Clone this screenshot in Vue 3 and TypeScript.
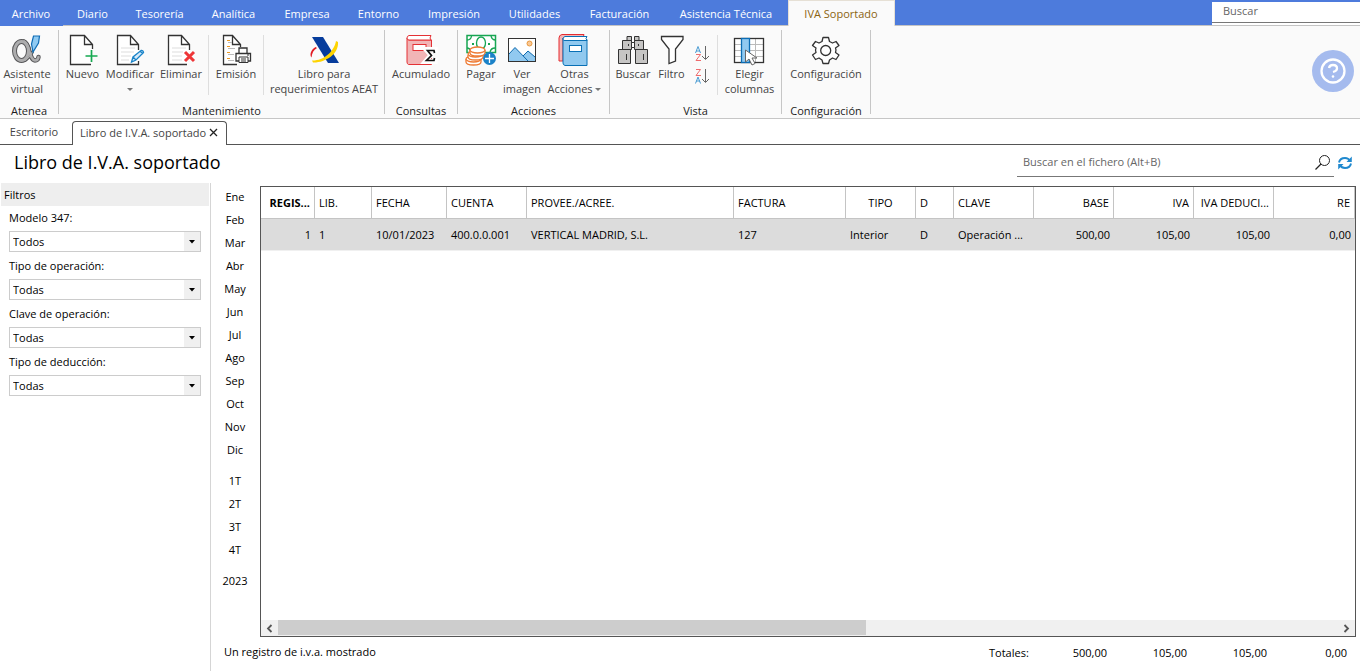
<script setup lang="ts">
import { ref } from 'vue'

const menus = ['Archivo', 'Diario', 'Tesorería', 'Analítica', 'Empresa', 'Entorno', 'Impresión', 'Utilidades', 'Facturación', 'Asistencia Técnica', 'IVA Soportado']
const activeMenu = 'IVA Soportado'

const filters = [
  { id: 'modelo', label: 'Modelo 347:', value: 'Todos' },
  { id: 'operacion', label: 'Tipo de operación:', value: 'Todas' },
  { id: 'clave', label: 'Clave de operación:', value: 'Todas' },
  { id: 'deduccion', label: 'Tipo de deducción:', value: 'Todas' },
]

const periods = [
  ['Ene', 'Feb', 'Mar', 'Abr', 'May', 'Jun', 'Jul', 'Ago', 'Sep', 'Oct', 'Nov', 'Dic'],
  ['1T', '2T', '3T', '4T'],
  ['2023'],
]

interface Column { key: string; title: string; value: string; align?: 'right' | 'center' }
const columns: Column[] = [
  { key: 'registro', title: 'REGIS...', value: '1', align: 'right' },
  { key: 'libro', title: 'LIB.', value: '1' },
  { key: 'fecha', title: 'FECHA', value: '10/01/2023' },
  { key: 'cuenta', title: 'CUENTA', value: '400.0.0.001' },
  { key: 'proveedor', title: 'PROVEE./ACREE.', value: 'VERTICAL MADRID, S.L.' },
  { key: 'factura', title: 'FACTURA', value: '127' },
  { key: 'tipo', title: 'TIPO', value: 'Interior', align: 'center' },
  { key: 'd', title: 'D', value: 'D' },
  { key: 'clave', title: 'CLAVE', value: 'Operación ...' },
  { key: 'base', title: 'BASE', value: '500,00', align: 'right' },
  { key: 'iva', title: 'IVA', value: '105,00', align: 'right' },
  { key: 'deducible', title: 'IVA DEDUCI...', value: '105,00', align: 'right' },
  { key: 're', title: 'RE', value: '0,00', align: 'right' },
]
const totals = ['500,00', '105,00', '105,00', '0,00']
const globalSearch = ref('')
const fileSearch = ref('')
</script>

<template>
  <div class="app">
    <header class="menubar">
      <nav class="menus" aria-label="Menú principal">
        <button v-for="m in menus" :key="m" class="menu" :class="{ active: m === activeMenu }">{{ m }}</button>
      </nav>
      <div class="global-search">
        <input v-model="globalSearch" type="text" placeholder="Buscar" aria-label="Buscar" />
      </div>
    </header>

    <section class="ribbon">
      <div class="group g-atenea">
        <div class="tools">
          <button class="tool">
            <svg class="icon" viewBox="0 0 32 32">
              <g fill="none" stroke-linecap="round">
                <g stroke="#58585a">
                  <ellipse cx="10.500" cy="16" rx="7" ry="9.500" stroke-width="5" />
                  <path d="M13 6.500C19 9 18 25 24 25.500Q27 25.500 27.500 22" stroke-width="4.500" />
                  <path d="M21.500 17Q19 22 14 25.500" stroke-width="3" />
                </g>
                <g stroke="#adadae">
                  <ellipse cx="10.500" cy="16" rx="7" ry="9.500" stroke-width="3" />
                  <path d="M13 6.500C19 9 18 25 24 25.500Q27 25.500 27.500 22" stroke-width="2.500" />
                  <path d="M21.500 17Q19 22 14 25.500" stroke-width="1.200" />
                </g>
              </g>
              <path d="M22.500 1H28.500L27.500 8L22 17L20.500 9Z" fill="#8fcaf2" stroke="#0f6cb5" stroke-width="1.200" />
            </svg>
            <span>Asistente<br />virtual</span>
          </button>
        </div>
        <div class="group-name">Atenea</div>
      </div>

      <div class="group g-mant">
        <div class="tools">
          <button class="tool">
            <svg class="icon" viewBox="0 0 32 32">
              <path d="M25.500 14V9.500L17.500 .500H3.500V29.500H24M17.500 .500V9.500H25.500" fill="#fff" stroke="#333" stroke-width="1.300" />
              <path d="M24.500 15V27M18.500 21H30.500" stroke="#16a951" stroke-width="1.700" />
            </svg>
            <span>Nuevo</span>
          </button>
          <button class="tool">
            <svg class="icon" viewBox="0 0 32 32">
              <path d="M24.500 15V9.500L16.500 .500H3.500V29.500H24.500V26M16.500 .500V9.500H24.500" fill="#fff" stroke="#333" stroke-width="1.300" />
              <path d="M7 13H21M7 17H20M7 21H17M7 25H15" stroke="#ddd" />
              <path d="M17.500 27L19 22L27 15.500Q29 15 29.500 17.500L22 25ZM19 22L22 25M26 16L29 19" fill="#d5eafa" stroke="#1883c8" stroke-width="1.300" />
            </svg>
            <span>Modificar</span>
            <svg class="caret" viewBox="0 0 6 4"><path d="M0 0H6L3 3Z" fill="#777" /></svg>
          </button>
          <button class="tool">
            <svg class="icon" viewBox="0 0 32 32">
              <path d="M24.500 15V9.500L16.500 .500H3.500V29.500H22M16.500 .500V9.500H24.500" fill="#fff" stroke="#333" stroke-width="1.300" />
              <path d="M7 13H21M7 17H18M7 21H17M7 25H17" stroke="#ddd" />
              <path d="M20 17L29 26M29 17L20 26" stroke="#ee3537" stroke-width="3" />
            </svg>
            <span>Eliminar</span>
          </button>
          <i class="divider"></i>
          <button class="tool">
            <svg class="icon" viewBox="0 0 32 32">
              <path d="M20.500 12V9.500L12.500 .500H3.500V29.500H17M12.500 .500V9.500H20.500" fill="#fff" stroke="#333" stroke-width="1.300" />
              <path d="M7 5.500H10M7 11.500H10M7 17.500H10M7 23.500H10" stroke="#eb9824" />
              <path d="M8 7.500H12M8 13.500H15M8 19.500H14M8 25.500H14" stroke="#bbb" />
              <path d="M19 18V13H27V18" fill="#fff" stroke="#333" stroke-width="1.300" />
              <path d="M19 26H16V18.500H30.500V26H27" fill="#fff" stroke="#333" stroke-width="1.300" />
              <path d="M19 22H28V27.500H19ZM21 24H26M21 26H26" fill="#fff" stroke="#333" />
              <path d="M27 20H29" stroke="#333" />
            </svg>
            <span>Emisión</span>
          </button>
          <i class="divider"></i>
          <button class="tool">
            <svg class="icon" viewBox="0 0 32 32">
              <path d="M4 2H15L31 28H20Z" fill="#063c9c" />
              <path d="M7.500 12C2.500 15 1.500 20 3.500 22.500C4 18 5.500 15 9 13Z" fill="#e21c24" />
              <path d="M28 6C26 17 15 26 4 25.500L5 27.500C17 28 31 19 30 7Z" fill="#fed401" />
            </svg>
            <span>Libro para<br />requerimientos AEAT</span>
          </button>
        </div>
        <div class="group-name">Mantenimiento</div>
      </div>

      <div class="group g-cons">
        <div class="tools">
          <button class="tool">
            <svg class="icon" viewBox="0 0 32 32">
              <path d="M3.500 5H26.500V29.500H3.500Q2 29 2 27V3Z" fill="#f1b5b6" stroke="#e43135" />
              <path d="M26 .500H4Q2 1 2 3T4 5H26L25 3Z" fill="#fff" stroke="#e43135" />
              <rect x="8" y="9.500" width="13" height="6" fill="#fff" stroke="#e43135" />
              <path d="M30 18V14.500H21L26 20L20.500 26.500H30V23" fill="none" stroke="#fff" stroke-width="5" />
              <path d="M29.500 18L29 15.500H22.500L26.500 20.500L21.500 25.500H29L29.500 23" fill="none" stroke="#111" stroke-width="1.700" />
            </svg>
            <span>Acumulado</span>
          </button>
        </div>
        <div class="group-name">Consultas</div>
      </div>

      <div class="group g-acc">
        <div class="tools">
          <button class="tool">
            <svg class="icon" viewBox="0 0 32 32">
              <path d="M2 .500H30.500V17.500H2Z" fill="#fff" stroke="#17a552" stroke-width="1.500" />
              <path d="M2 5Q6 5 6.500 1M26 1Q27 5 30.500 5M2 13Q5 13 6 17M25 17Q26 13 30 13" fill="none" stroke="#17a552" stroke-width="1.300" />
              <ellipse cx="16" cy="8" rx="4.500" ry="6" fill="none" stroke="#17a552" stroke-width="1.300" />
              <path d="M7 9H9M23 9H25" stroke="#17a552" stroke-width="2" />
              <g fill="#fff" stroke="#ee7b35" stroke-width="1.300">
                <path d="M1 24V27C1 31 16 31 16 27V24" /><ellipse cx="8.500" cy="24" rx="7.500" ry="3" />
                <path d="M3 20V22C3 26 18 26 18 22V20" /><ellipse cx="10.500" cy="19" rx="7.500" ry="3" />
                <path d="M5 15V18C5 22 20 22 20 18V15" /><ellipse cx="12.500" cy="15" rx="7.500" ry="3" />
              </g>
              <circle cx="24.500" cy="23.500" r="6.500" fill="#1b82c8" />
              <path d="M24.500 19V28M20 23.500H29" stroke="#fff" stroke-width="1.300" />
            </svg>
            <span>Pagar</span>
          </button>
          <button class="tool">
            <svg class="icon" viewBox="0 0 32 32">
              <rect x="2.500" y="3.500" width="27" height="23" fill="#fff" />
              <path d="M3 19L9 12.500L17 21L22 16L29 22V26H3Z" fill="#91c9f0" />
              <path d="M3 19L9 12.500L22 26M17 21L22 16L29 22" fill="none" stroke="#0d69ae" />
              <circle cx="23.500" cy="8.500" r="2.500" fill="#f9c896" stroke="#e9983c" />
              <rect x="2.500" y="3.500" width="27" height="23" fill="none" stroke="#333" />
            </svg>
            <span>Ver<br />imagen</span>
          </button>
          <button class="tool">
            <svg class="icon" viewBox="0 0 32 32">
              <path d="M25 -.500H3Q0 0 0 3V26H4V3H24Z" fill="#f4b4b5" stroke="#e52c31" />
              <path d="M5 4.500H28V30.500H6Q4 30 4 28V3Z" fill="#91c9ef" stroke="#0970b5" />
              <path d="M28 1.500H6Q4 2 4 4T6 5.500H28L27 3.500Z" fill="#fff" stroke="#0970b5" />
              <rect x="10.500" y="10.500" width="12" height="6" fill="#fff" stroke="#0970b5" />
            </svg>
            <span>Otras<br />Acciones <svg class="caret inline" viewBox="0 0 6 4"><path d="M0 0H6L3 3Z" fill="#777" /></svg></span>
          </button>
        </div>
        <div class="group-name">Acciones</div>
      </div>

      <div class="group g-vista">
        <div class="tools">
          <button class="tool">
            <svg class="icon" viewBox="0 0 32 32">
              <g fill="#c6c5c4" stroke="#333">
                <path d="M10 1.500H14.500V5.500H10ZM17.500 1.500H22V5.500H17.500ZM5.500 5.500H14.500V14.500H5.500ZM17.500 5.500H26.500V14.500H17.500ZM1.500 14.500H13.500V28.500H1.500ZM18.500 14.500H30.500V28.500H18.500Z" />
                <path d="M14.500 7.500H17.500V12.500H14.500Z" fill="#fff" />
                <path d="M9.500 19V25M11.500 9V11M21.500 9V11M26.500 19V25" />
              </g>
            </svg>
            <span>Buscar</span>
          </button>
          <button class="tool">
            <svg class="icon" viewBox="0 0 32 32"><path d="M5.500 1.500H27V4.500L19.500 14V26L13 28.500V14L5.500 4.500Z" fill="#fff" stroke="#333" stroke-width="1.300" /></svg>
            <span>Filtro</span>
          </button>
          <div class="sorts">
            <button aria-label="Orden ascendente">
              <svg viewBox="0 0 16 17"><path d="M1.500 8L4 1.500L6.500 8M2 6H6" fill="none" stroke="#4b9cd3" /><path d="M2 9.500H6.500L2 15.500H7" fill="none" stroke="#ee6b6d" /><path d="M11.500 1V14M8 11L11.500 14.500L15 11" fill="none" stroke="#666" /></svg>
            </button>
            <button aria-label="Orden descendente">
              <svg viewBox="0 0 16 17"><path d="M2 1.500H6.500L2 7.500H7" fill="none" stroke="#ee6b6d" /><path d="M1.500 15.500L4 9L6.500 15.500M2 13H6" fill="none" stroke="#4b9cd3" /><path d="M11.500 1V14M8 11L11.500 14.500L15 11" fill="none" stroke="#666" /></svg>
            </button>
          </div>
          <i class="divider"></i>
          <button class="tool">
            <svg class="icon" viewBox="0 0 32 32">
              <rect x=".500" y="3.500" width="29" height="24" fill="#fff" />
              <path d="M1 9.500H29M1 15.500H29M1 21.500H29M21.500 4V27" stroke="#bbb" />
              <rect x=".500" y="3.500" width="29" height="24" fill="none" stroke="#333" stroke-width="1.300" />
              <rect x="7.500" y="3.500" width="8" height="24" fill="#91c9f0" stroke="#0c6db5" stroke-width="1.300" />
              <path d="M11.500 15V27L15 24L18 30L21 28.500L18 23H23Z" fill="#fff" stroke="#666" />
            </svg>
            <span>Elegir<br />columnas</span>
          </button>
        </div>
        <div class="group-name">Vista</div>
      </div>

      <div class="group g-conf">
        <div class="tools">
          <button class="tool">
            <svg class="icon" viewBox="0 0 32 32">
              <path d="M13 2.500H18.500L19.500 6.500L22.500 8L26 6.500L29 10.500L25.500 13Q26.500 15 25.500 17.500L29 20L26 24.500L22.500 23L19.500 25L18.500 28.500H13L12 25L9 23L5.500 24.500L2.500 20L6 17.500Q5 15 6 13L2.500 10.500L5.500 6.500L9 8L12 6.500Z" fill="#fff" stroke="#333" stroke-width="1.300" stroke-linejoin="round" />
              <circle cx="15.700" cy="15.500" r="5" fill="#fff" stroke="#333" stroke-width="1.300" />
            </svg>
            <span>Configuración</span>
          </button>
        </div>
        <div class="group-name">Configuración</div>
      </div>

      <button class="help" aria-label="Ayuda">
        <svg viewBox="0 0 42 42">
          <circle cx="21" cy="21" r="21" fill="#a5bbee" />
          <circle cx="21" cy="21" r="11.500" fill="none" stroke="#fff" stroke-width="2.300" />
          <path d="M17 18Q17.500 15 21 15Q25 15 25 18.500Q25 21 21 22" fill="none" stroke="#fff" stroke-width="2.300" />
          <circle cx="21" cy="26.500" r="1.300" fill="#fff" />
        </svg>
      </button>
    </section>

    <nav class="tabs" aria-label="Ventanas abiertas">
      <button class="tab first">Escritorio</button>
      <div class="tab current">
        <button>Libro de I.V.A. soportado</button>
        <button class="close" aria-label="Cerrar">
          <svg viewBox="0 0 9 9"><path d="M1 1L8 8M8 1L1 8" stroke="#222" stroke-width="1.300" /></svg>
        </button>
      </div>
      <div class="tab rest"></div>
    </nav>

    <div class="heading">
      <h1>Libro de I.V.A. soportado</h1>
      <div class="file-search">
        <input v-model="fileSearch" type="text" placeholder="Buscar en el fichero (Alt+B)" aria-label="Buscar en el fichero" />
        <button aria-label="Buscar en el fichero">
          <svg viewBox="0 0 16 16"><circle cx="9.500" cy="6.500" r="5" fill="none" stroke="#222" /><path d="M6 10L.500 15.500" stroke="#222" stroke-width="1.200" /></svg>
        </button>
      </div>
      <button class="refresh" aria-label="Actualizar">
        <svg viewBox="0 0 16 16">
          <path d="M2 7.500Q3 3 8 3Q11.500 3 13 6M14 8.500Q13 13 8 13Q4.500 13 3 10" fill="none" stroke="#2089cf" stroke-width="2" />
          <path d="M14.800 1.500V7H9.500ZM1.200 14.500V9H6.500Z" fill="#2089cf" />
        </svg>
      </button>
    </div>

    <main class="content">
      <aside class="filters">
        <h2>Filtros</h2>
        <div v-for="f in filters" :key="f.id" class="field">
          <label :for="f.id">{{ f.label }}</label>
          <div class="combo">
            <select :id="f.id"><option>{{ f.value }}</option></select>
            <span class="arrow"><svg viewBox="0 0 6 4"><path d="M0 0H6L3 3.500Z" fill="#000" /></svg></span>
          </div>
        </div>
      </aside>

      <div class="workspace">
        <div class="upper">
          <nav class="periods" aria-label="Periodo">
            <div v-for="(g, i) in periods" :key="i" class="period-set">
              <button v-for="p in g" :key="p">{{ p }}</button>
            </div>
          </nav>
          <div class="grid-box">
            <div class="grid-scroll">
              <table>
                <colgroup><col v-for="c in columns" :key="c.key" :class="'c-' + c.key" /></colgroup>
                <thead>
                  <tr><th v-for="c in columns" :key="c.key" :class="c.align">{{ c.title }}</th></tr>
                </thead>
                <tbody>
                  <tr><td v-for="c in columns" :key="c.key" :class="c.align">{{ c.value }}</td></tr>
                </tbody>
              </table>
            </div>
            <div class="scrollbar">
              <button aria-label="Desplazar a la izquierda"><svg viewBox="0 0 7 9"><path d="M5.500 1L2 4.500L5.500 8" fill="none" stroke="#555" stroke-width="1.800" /></svg></button>
              <div class="track"><div class="thumb"></div></div>
              <button aria-label="Desplazar a la derecha"><svg viewBox="0 0 7 9"><path d="M1.500 1L5 4.500L1.500 8" fill="none" stroke="#555" stroke-width="1.800" /></svg></button>
            </div>
          </div>
        </div>
        <footer class="status">
          <span class="count">Un registro de i.v.a. mostrado</span>
          <span class="totals-name">Totales:</span>
          <span v-for="(t, i) in totals" :key="i" class="total">{{ t }}</span>
        </footer>
      </div>
    </main>
  </div>
</template>

<style>
body { margin: 0; background: #fff; }
</style>

<style scoped>
* { box-sizing: border-box; }
.app {
  min-height: 100vh;
  display: flex;
  flex-direction: column;
  font-family: "Open Sans", "Noto Sans", sans-serif;
  font-size: 11px;
  line-height: 15px;
  color: #000;
  overflow: hidden;
}
button, input, select { font: inherit; color: inherit; border: 0; background: none; padding: 0; margin: 0; border-radius: 0; outline: 0; }
button { white-space: nowrap; }
svg { display: block; }

.menubar { display: flex; justify-content: space-between; height: 26px; background: #4d7bdc; border-bottom: 1px solid #c4c4c4; }
.menus { display: grid; grid-template-columns: 63px 60px 74px 74px 73px 70px 81px 80px 90px 123px 107px; }
.menu { color: #fff; height: 25px; padding: 1px 1px 0 0; }
.menu:first-child { height: 26px; background: #4d7bdc; }
.menu.active { color: #8a6410; background: #fafafa; height: 26px; border: 1px solid #e6e0d5; border-bottom: 0; padding-top: 0; }
.global-search { width: 148px; border-top: 2px solid #4d7bdc; background: #fff; }
.global-search input { display: block; width: 100%; height: 21px; padding: 0 11px 3px; border-bottom: 1px solid #777; }
input::placeholder { color: #666; opacity: 1; }

.ribbon { display: flex; height: 93px; background: #fafafa; border-bottom: 1px solid #c6c6c6; padding: 4px 0; color: #444; }
.group { flex: none; border-right: 1px solid #c6c6c6; display: flex; flex-direction: column; height: 84px; }
.g-atenea { width: 59px; }
.g-mant { width: 326px; }
.g-cons { width: 73px; }
.g-acc { width: 152px; }
.g-vista { width: 172px; }
.g-conf { width: 89px; }
.tools { display: grid; flex: none; height: 73px; padding-top: 5px; grid-template-columns: minmax(0, 1fr); }
.g-atenea .tools { grid-template-columns: 54px; }
.g-mant .tools { grid-template-columns: 47px 48px 54px 1px 54px 1px 120px; }
.g-acc .tools { grid-template-columns: 46px 36px 69px; }
.g-vista .tools { grid-template-columns: 46px 31px 30px 1px 63px; }
.tool { display: flex; flex-direction: column; align-items: center; justify-content: flex-start; text-align: center; }
.icon { width: 32px; height: 32px; flex: none; overflow: visible; margin-bottom: -1px; }
.caret { width: 6px; height: 4px; margin-top: 7px; }
.caret.inline { display: inline-block; margin: 0; vertical-align: middle; }
.divider { width: 1px; height: 60px; background: #dedede; }
.sorts { display: flex; flex-direction: column; align-items: center; gap: 6px; padding-top: 10px; }
.sorts svg { width: 16px; height: 17px; }
.group-name { text-align: center; color: #1c1c1c; line-height: 15px; }
.help { width: 42px; height: 42px; margin: 20px 6px 0 auto; }

.tabs { display: flex; height: 26px; padding-top: 2px; color: #444; }
.tab { border-bottom: 1px solid #555; }
.first { width: 72px; padding: 0 4px 2px 0; }
.rest { flex: 1; }
.current { display: flex; align-items: center; border: 1px solid #555; border-bottom: 0; border-radius: 4px 4px 0 0; padding: 0 8px 3px 7px; width: 155px; justify-content: space-between; }
.close { width: 9px; height: 9px; flex: none; }
.close svg { width: 9px; height: 9px; }

.heading { display: flex; align-items: flex-start; height: 38px; padding: 0 7px 0 14px; }
h1 { margin: 0; font-size: 18px; font-weight: 400; line-height: 35px; flex: 1; }
.file-search { width: 317px; height: 32px; border-bottom: 1px solid #777; display: flex; align-items: center; padding: 2px 3px 0 6px; }
.file-search input { flex: 1; min-width: 0; height: 24px; }
.file-search button { width: 16px; height: 16px; }
.refresh { width: 16px; height: 16px; margin: 10px 0 0 3px; }

.content { flex: 1; display: flex; }
.filters { width: 211px; border-right: 1px solid #d5d5d5; padding: 0 1px; }
h2 { margin: 0 0 4px; font-size: 11px; font-weight: 400; line-height: 23px; height: 23px; padding-left: 3px; background: #eee; }
.field { height: 48px; padding: 0 8px; }
label { display: block; line-height: 16px; height: 21px; }
.combo { position: relative; height: 21px; }
select { appearance: none; width: 100%; height: 21px; border: 1px solid #ccc; background: #fff; padding: 0 20px 0 3px; display: block; }
.arrow { position: absolute; top: 1px; right: 1px; bottom: 1px; width: 16px; background: #f0f0f0; display: flex; align-items: center; justify-content: center; pointer-events: none; }
.arrow svg { width: 6px; height: 4px; }

.workspace { flex: 1; min-width: 0; display: flex; flex-direction: column; padding: 3px 4px 0 0; }
.upper { flex: 1; display: flex; }
.periods { width: 49px; display: flex; flex-direction: column; gap: 8px; }
.period-set { display: flex; flex-direction: column; }
.period-set button { height: 23px; padding: 0 1px 2px 0; }
.grid-box { flex: 1; min-width: 0; border: 1px solid #555; display: flex; flex-direction: column; }
.grid-scroll { flex: 1; overflow: hidden; }
table { width: 100%; table-layout: fixed; border-collapse: separate; border-spacing: 0; }
.c-registro { width: 54px; }
.c-libro { width: 57px; }
.c-fecha { width: 75px; }
.c-cuenta, .c-clave, .c-base, .c-iva, .c-deducible { width: 80px; }
.c-factura { width: 112px; }
.c-tipo { width: 70px; }
.c-d { width: 38px; }
.c-re { width: 81px; }
th, td { text-align: left; font-weight: 400; padding: 0 4px; white-space: nowrap; overflow: hidden; height: 32px; }
th { border-right: 1px solid #c4c4c4; border-bottom: 1px solid #c4c4c4; }
th:first-child { font-weight: 700; }
td { background: #dcdcdc; border-bottom: 1px solid #f0f0f0; }
th.right, td.right { text-align: right; }
th.center { text-align: center; }
.scrollbar { display: flex; height: 16px; background: #f0f0f0; }
.scrollbar button { width: 17px; display: flex; align-items: center; justify-content: center; }
.scrollbar svg { width: 7px; height: 9px; }
.track { flex: 1; }
.thumb { width: 55.5%; height: 15px; background: #cdcdcd; }

.status { height: 34px; display: flex; align-items: center; padding-bottom: 3px; }
.count { flex: 1; padding-left: 13px; padding-bottom: 3px; }
.totals-name { width: 47px; }
.total { width: 80px; text-align: right; padding-right: 9px; }
</style>
